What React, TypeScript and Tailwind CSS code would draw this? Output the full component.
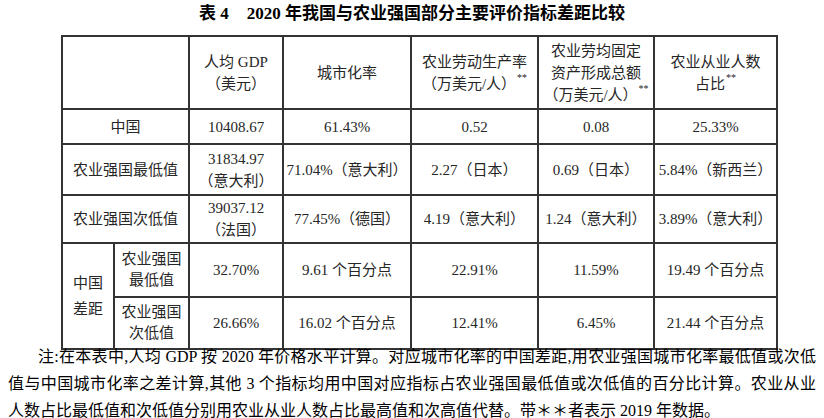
const cell = "border-2 border-[#333] text-center align-middle p-0 whitespace-nowrap";

function Star() {
  return <span className="inline-block align-top text-[10px] leading-[12px] ml-[1px] -mt-[1px]">**</span>;
}

export default function App() {
  return (
    <div className="w-[824px] h-[418px] overflow-hidden bg-white text-[#262626] font-['Liberation_Serif','Noto_Sans_CJK_SC',serif]">
      <div className="h-[35px] pt-[4px] text-center text-[17px] leading-[20px] font-bold text-black">
        表 4<span className="inline-block w-[18px]" />2020 年我国与农业强国部分主要评价指标差距比较
      </div>

      <table className="ml-[61px] w-[715px] table-fixed border-collapse text-[15px] leading-[22px]">
        <colgroup>
          <col className="w-[52px]" />
          <col className="w-[75px]" />
          <col className="w-[94px]" />
          <col className="w-[128px]" />
          <col className="w-[127px]" />
          <col className="w-[116px]" />
          <col className="w-[123px]" />
        </colgroup>
        <tbody>
          <tr className="h-[73px]">
            <td colSpan={2} className={cell} />
            <td className={cell}>人均 GDP<br />（美元）</td>
            <td className={cell}>城市化率</td>
            <td className={cell}>农业劳动生产率<br />（万美元/人）<Star /></td>
            <td className={cell}>农业劳均固定<br />资产形成总额<br />（万美元/人）<Star /></td>
            <td className={cell}>农业从业人数<br />占比<Star /></td>
          </tr>
          <tr className="h-[35px]">
            <td colSpan={2} className={cell}>中国</td>
            <td className={cell}>10408.67</td>
            <td className={cell}>61.43%</td>
            <td className={cell}>0.52</td>
            <td className={cell}>0.08</td>
            <td className={cell}>25.33%</td>
          </tr>
          <tr className="h-[51px]">
            <td colSpan={2} className={cell}>农业强国最低值</td>
            <td className={cell}>31834.97<br />（意大利）</td>
            <td className={cell}>71.04%（意大利）</td>
            <td className={cell}>2.27（日本）</td>
            <td className={cell}>0.69（日本）</td>
            <td className={cell}>5.84%（新西兰）</td>
          </tr>
          <tr className="h-[48px]">
            <td colSpan={2} className={cell}>农业强国次低值</td>
            <td className={cell}>39037.12<br />（法国）</td>
            <td className={cell}>77.45%（德国）</td>
            <td className={cell}>4.19（意大利）</td>
            <td className={cell}>1.24（意大利）</td>
            <td className={cell}>3.89%（意大利）</td>
          </tr>
          <tr className="h-[54px]">
            <td rowSpan={2} className={`${cell} leading-[26px]`}>中国<br />差距</td>
            <td className={`${cell} leading-[21px]`}>农业强国<br />最低值</td>
            <td className={cell}>32.70%</td>
            <td className={cell}>9.61 个百分点</td>
            <td className={cell}>22.91%</td>
            <td className={cell}>11.59%</td>
            <td className={cell}>19.49 个百分点</td>
          </tr>
          <tr className="h-[52px]">
            <td className={`${cell} leading-[21px]`}>农业强国<br />次低值</td>
            <td className={cell}>26.66%</td>
            <td className={cell}>16.02 个百分点</td>
            <td className={cell}>12.41%</td>
            <td className={cell}>6.45%</td>
            <td className={cell}>21.44 个百分点</td>
          </tr>
        </tbody>
      </table>

      <div className="-mt-[7px] px-[8px] text-[16px] leading-[27px] text-black">
        <div className="pl-[30px] text-justify [text-align-last:justify] whitespace-nowrap">
          注:在本表中,人均 GDP 按 2020 年价格水平计算。对应城市化率的中国差距,用农业强国城市化率最低值或次低
        </div>
        <div className="text-justify [text-align-last:justify] whitespace-nowrap">
          值与中国城市化率之差计算,其他 3 个指标均用中国对应指标占农业强国最低值或次低值的百分比计算。农业从业
        </div>
        <div className="whitespace-nowrap">
          人数占比最低值和次低值分别用农业从业人数占比最高值和次高值代替。带＊＊者表示 2019 年数据。
        </div>
      </div>
    </div>
  );
}
